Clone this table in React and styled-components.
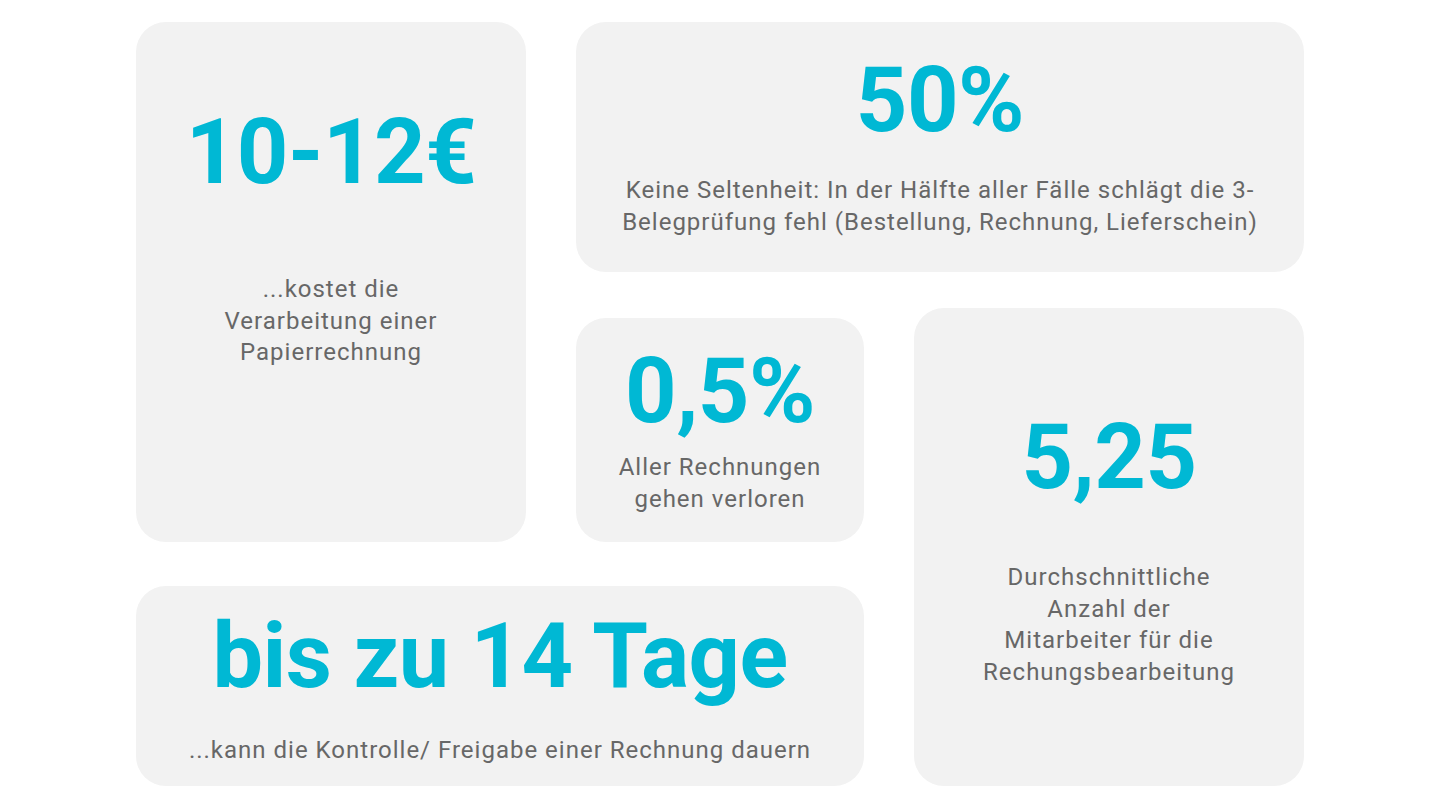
import styled, { createGlobalStyle } from "styled-components";

const GlobalStyle = createGlobalStyle`
  html, body {
    margin: 0;
    padding: 0;
    background: #ffffff;
  }
  body {
    font-family: Roboto, "Liberation Sans", sans-serif;
  }
`;

const Board = styled.main`
  width: 1168px;
  margin: 0 auto;
  padding-top: 22px;
  display: grid;
  grid-template-columns: 390px 288px 390px;
  grid-template-rows: 250px 36px 10px 224px 44px 200px;
  column-gap: 50px;
`;

const Card = styled.section`
  grid-area: ${(p) => p.$area};
  background: #f2f2f2;
  border-radius: 30px;
  display: flex;
  flex-direction: column;
  align-items: center;
  padding-top: ${(p) => p.$top}px;
  gap: ${(p) => p.$gap}px;
  box-sizing: border-box;
  text-align: center;
`;

const Figure = styled.div`
  font-family: Roboto, "Liberation Sans", sans-serif;
  font-weight: 700;
  font-size: 90px;
  line-height: 1;
  letter-spacing: -0.5px;
  color: #00b8d4;
  white-space: nowrap;
`;

const Caption = styled.p`
  margin: 0;
  font-family: Roboto, "Liberation Sans", sans-serif;
  font-weight: 400;
  font-size: 24px;
  line-height: 31.5px;
  letter-spacing: 1px;
  color: #676767;
`;

const stats = [
  {
    area: "1 / 1 / 5 / 2",
    top: 86,
    gap: 76,
    figure: "10-12€",
    caption: ["...kostet die", "Verarbeitung einer", "Papierrechnung"],
  },
  {
    area: "1 / 2 / 2 / 4",
    top: 34,
    gap: 29,
    figure: "50%",
    caption: [
      "Keine Seltenheit: In der Hälfte aller Fälle schlägt die 3-",
      "Belegprüfung fehl (Bestellung, Rechnung, Lieferschein)",
    ],
  },
  {
    area: "4 / 2 / 5 / 3",
    top: 29,
    gap: 15,
    figure: "0,5%",
    caption: ["Aller Rechnungen", "gehen verloren"],
  },
  {
    area: "3 / 3 / 7 / 4",
    top: 105,
    gap: 59,
    figure: "5,25",
    caption: [
      "Durchschnittliche",
      "Anzahl der",
      "Mitarbeiter für die",
      "Rechungsbearbeitung",
    ],
  },
  {
    area: "6 / 1 / 7 / 3",
    top: 26,
    gap: 33,
    figure: "bis zu 14 Tage",
    caption: ["...kann die Kontrolle/ Freigabe einer Rechnung dauern"],
  },
];

export default function App() {
  return (
    <>
      <GlobalStyle />
      <Board>
        {stats.map((s) => (
          <Card key={s.figure} $area={s.area} $top={s.top} $gap={s.gap}>
            <Figure>{s.figure}</Figure>
            <Caption>
              {s.caption.map((line, i) => (
                <span key={i}>
                  {line}
                  {i < s.caption.length - 1 && <br />}
                </span>
              ))}
            </Caption>
          </Card>
        ))}
      </Board>
    </>
  );
}
